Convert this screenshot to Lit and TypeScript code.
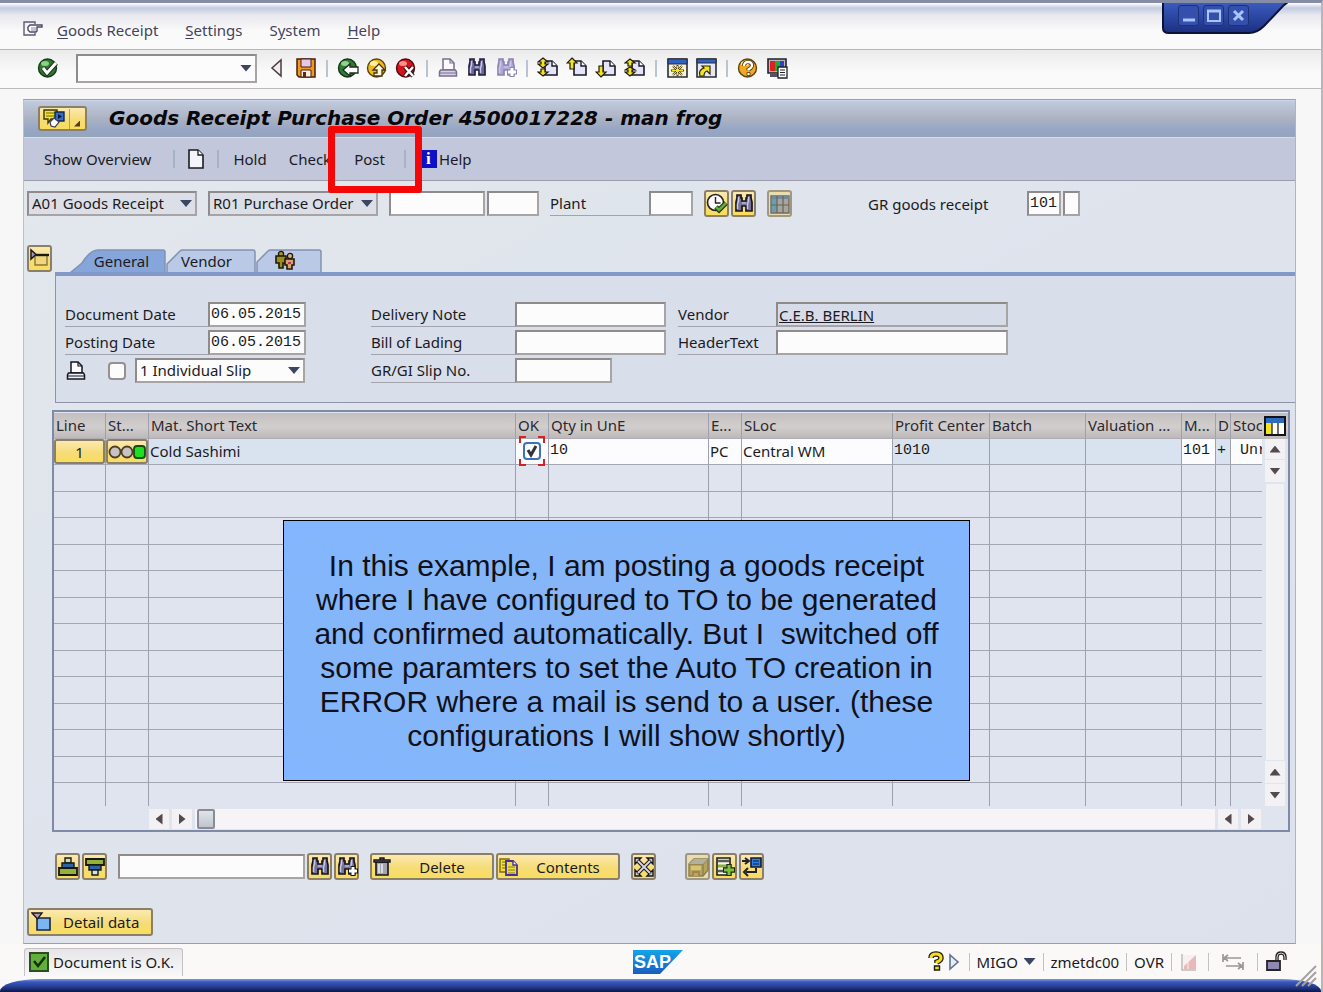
import { LitElement, html, svg, css, nothing } from "lit";
import { customElement } from "lit/decorators.js";
import { classMap } from "lit/directives/class-map.js";

const binoculars = (body: string, edge: string) => svg`
  <path d="M4 2h4v3h1v3h4V5h1V2h4v3l1 4v9h-6v-5H9v5H3V9l1-4z" fill=${body} stroke=${edge} stroke-width="1.7"/>
  <path d="M5.500 4v4l-1 3v5M15.500 4v4l-1 3v5" fill="none" stroke="#c9c7ea" stroke-width="1.5"/>
  <path d="M9 10h4" stroke="#c9c7ea" stroke-width="1.2"/>`;

const sheet = svg`
  <path d="M8 4h7l5 5v9H8z" fill="#e4e4fa" stroke="#1c1a24" stroke-width="1.6"/>
  <path d="M15 4v5h5" fill="#fff" stroke="#1c1a24" stroke-width="1.4"/>`;

const printer = (fill: string, edge: string) => svg`
  <path d="M6 2h7l4 4v7H6z" fill="#fbfbff" stroke=${edge} stroke-width="1.5"/>
  <path d="M13 2v4h4" fill="none" stroke=${edge} stroke-width="1.2"/>
  <path d="M3.500 13h15l1 2v4h-17v-4z" fill=${fill} stroke=${edge} stroke-width="1.5"/>
  <path d="M3 16h16" stroke=${edge} stroke-width="1"/>`;

const ball = (fill: string, light: string, edge: string) => svg`
  <circle cx="10.500" cy="11" r="9" fill=${fill} stroke=${edge} stroke-width="1.4"/>
  <ellipse cx="8" cy="6.500" rx="4" ry="2.500" fill=${light}/>`;

const icons: Record<string, unknown> = {
  menu: svg`<path d="M13 5V3H2v13h11v-2" fill="none" stroke="#5d5b78" stroke-width="1.4"/>
    <path d="M6 8l2-2h12v2h-5v4l-1 1H8l-2-2z" fill="#fff" stroke="#4c4a66" stroke-width="1.4"/><path d="M9 9h6M9 11h6" stroke="#8886a0"/>`,
  enter: svg`${ball("#2d7a2c", "#8fd08a", "#163a18")}<path d="M6 11l4 5 9-10" fill="none" stroke="#20301f" stroke-width="5"/><path d="M6 11l4 5 9-10" fill="none" stroke="#fff" stroke-width="3"/>`,
  prev: svg`<path d="M15 3v16L6 11z" fill="#efedf0" stroke="#4b3b3b" stroke-width="1.5"/>`,
  save: svg`<path d="M2 2h18v18H4l-2-2z" fill="#f09a1c" stroke="#4a1d10" stroke-width="1.5"/><path d="M6 2h10v8H6z" fill="#e3c8ea" stroke="#4a1d10"/><path d="M6 13h10v7H6z" fill="#f7efe6" stroke="#4a1d10"/><path d="M8 15h3v5H8z" fill="#5b2a18"/>`,
  back: svg`${ball("#2f7d32", "#94d190", "#16311a")}<path d="M6 13l7-6v3h8v6h-8v3z" fill="#fff" stroke="#1d2c1d" stroke-width="1.300"/>`,
  exit: svg`${ball("#f2b91c", "#fff3a0", "#5a4310")}<path d="M13 7l6 6h-3v6H8v-3h3v-3H7z" fill="#fffbe0" stroke="#443510" stroke-width="1.300"/>`,
  cancel: svg`${ball("#d2141c", "#f59090", "#4c0c0e")}<path d="M10 10l8 9M18 10l-8 9" stroke="#33100f" stroke-width="4.500"/><path d="M10 10l8 9M18 10l-8 9" stroke="#fff" stroke-width="2.500"/>`,
  print: printer("#d9d0e8", "#776f8c"),
  printDark: printer("#eef0fa", "#15151c"),
  find: binoculars("#6a679c", "#23213c"),
  findDark: binoculars("#77749c", "#17151c"),
  findNext: svg`${binoculars("#b0a8d4", "#8d84b0")}<path d="M17 10v10M12 15h10" stroke="#8a84b0" stroke-width="5"/><path d="M17 11v8M13 15h8" stroke="#fff" stroke-width="3"/>`,
  findNextDark: svg`${binoculars("#77749c", "#17151c")}<path d="M17 10v10M12 15h10" stroke="#17151c" stroke-width="5"/><path d="M17 11v8M13 15h8" stroke="#fff" stroke-width="3"/>`,
  first: svg`${sheet}<path d="M6 1l5 4H8v2h3l-5 4-5-4h3V5H1z" fill="#f4e223" stroke="#1c1a0c" stroke-width="1.200"/><path d="M4 12h4v3h3l-5 4-5-4h3z" fill="#f4e223" stroke="#1c1a0c" stroke-width="1.200"/>`,
  pageUp: svg`${sheet}<path d="M6 1l5 5H8v6H4V6H1z" fill="#f4e223" stroke="#1c1a0c" stroke-width="1.200"/>`,
  pageDown: svg`${sheet}<path d="M6 20l5-5H8V9H4v6H1z" fill="#f4e223" stroke="#1c1a0c" stroke-width="1.200"/>`,
  last: svg`${sheet}<path d="M6 2l5 4H8v3H4V6H1z" fill="#f4e223" stroke="#1c1a0c" stroke-width="1.200"/><path d="M6 10l5 3H8v2h3l-5 4-5-4h3v-2H1z" fill="#f4e223" stroke="#1c1a0c" stroke-width="1.200"/>`,
  session: svg`<path d="M2 2h19v18H2z" fill="#f7f3d8" stroke="#2b2b34" stroke-width="1.6"/><path d="M2 2h19v5H2z" fill="#2e63c4" stroke="#2b2b34"/><path d="M11.500 8v11M5 13.500h13M7 9l9 9M16 9l-9 9" stroke="#4a430f" stroke-width="2"/><path d="M11.500 9v9M6 13.500h11M7 9l9 9M16 9l-9 9" stroke="#f6e51e" stroke-width="1"/>`,
  shortcut: svg`<path d="M2 2h19v18H2z" fill="#e6e7f4" stroke="#2b2b34" stroke-width="1.6"/><path d="M2 2h19v4H2z" fill="#2e63c4" stroke="#2b2b34"/><path d="M5 19q-2-6 4-8L7 9h8v8l-3-3q-3 1-3 5z" fill="#f6e51e" stroke="#29260b" stroke-width="1.200"/>`,
  help: svg`${ball("#f3a820", "#fff2a2", "#5b4210")}<path d="M7 9q0-4 4-4t4 3.500q0 2-3.500 4v1" fill="none" stroke="#4d360e" stroke-width="4"/><path d="M7 9q0-4 4-4t4 3.500q0 2-3.500 4v1" fill="none" stroke="#fff" stroke-width="2.400"/><path d="M10 15.500h3v3h-3z" fill="#fff" stroke="#4d360e" stroke-width=".8"/>`,
  layout: svg`<path d="M2 2h18v14H2z" fill="#b8b8c6" stroke="#22202a" stroke-width="1.600"/><path d="M4 4h5v10H4z" fill="#e02020"/><path d="M9 4h5v10H9z" fill="#1fae2c"/><path d="M14 4h4v10h-4z" fill="#2d3fc8"/><path d="M4 17h8v3H4z" fill="#55535f"/><path d="M12 10h9v11h-9z" fill="#fff" stroke="#22202a" stroke-width="1.300"/><path d="M14 13h5M14 15.500h5M14 18h5" stroke="#22202a"/>`,
  services: svg`<path d="M1 2h13v9H8l-3 4v-4H1z" fill="#f5e52c" stroke="#3c3410" stroke-width="1.400"/><path d="M3 5h9M3 8h9" stroke="#6b6017"/><path d="M12 4h9v9h-9z" fill="#2d6fd0" stroke="#15244a" stroke-width="1.400"/><path d="M15 6l4 2.500-4 2.500z" fill="#0c1530"/><path d="M7 14l4-4 5 4-4 5-4-1z" fill="#fff" stroke="#3e3e54" stroke-width="1.200"/>`,
  create: svg`<path d="M4 2h9l5 5v13H4z" fill="#f4f4fc" stroke="#1b1b22" stroke-width="1.600"/><path d="M13 2v5h5" fill="#fff" stroke="#1b1b22" stroke-width="1.300"/>`,
  execute: svg`<circle cx="9.500" cy="9.500" r="8" fill="#fff" stroke="#23212b" stroke-width="1.600"/><path d="M9.500 4v6h5" fill="none" stroke="#23212b" stroke-width="1.400"/><path d="M10 14l3 3 7-7" fill="none" stroke="#1d3711" stroke-width="5"/><path d="M10 14l3 3 7-7" fill="none" stroke="#63a93b" stroke-width="2.600"/>`,
  grid: svg`<path d="M2 3h18v17H2z" fill="#a9a49c" stroke="#6d6a64" stroke-width="1.400"/><path d="M3 3h17v3H3z" fill="#77879a"/><path d="M3 6h5v13H3z" fill="#6aa0ae"/><path d="M8 3v17M14 3v17M2 12h18" stroke="#66645f" stroke-width="1.200"/>`,
  tree: svg`<path d="M6 7h12v10H6z" fill="#f3d67c" stroke="#8a7638" stroke-width="1.400"/><path d="M2 2v9l5-4.500z" fill="#a497b4" stroke="#1d1a16" stroke-width="1.500"/><path d="M7 7h13" stroke="#1d1a16" stroke-width="2.400"/>`,
  people: svg`<circle cx="7" cy="4" r="2.600" fill="#a8921c" stroke="#1e1a0a" stroke-width="1.300"/><path d="M2 6h10v7H9v5H5v-5H2z" fill="#9c8e1a" stroke="#1e1a0a" stroke-width="1.600"/><circle cx="16" cy="6" r="2.600" fill="#e0b48a" stroke="#1e1a0a" stroke-width="1.300"/><path d="M11 9h9v6h-2v4h-5v-4h-2z" fill="#d9a26a" stroke="#1e1a0a" stroke-width="1.600"/><path d="M14 13h3" stroke="#b53a6a" stroke-width="2"/>`,
  config: svg`<path d="M1 2h20v18H1z" fill="#fdfdf6" stroke="#11121a" stroke-width="2"/><path d="M2 3h18v5H2z" fill="#2c6cc0"/><path d="M2 8h6v11H2z" fill="#f4e41c"/><path d="M8 8v11M14 8v11" stroke="#11121a" stroke-width="1.200"/>`,
  sortUp: svg`<path d="M8 2h6v5H8z" fill="#cfd8c0" stroke="#171a12" stroke-width="1.400"/><path d="M5 7h12v5H5z" fill="#2c64a8" stroke="#171a12" stroke-width="1.400"/><path d="M2 12h18v7H2z" fill="#96b13a" stroke="#171a12" stroke-width="1.800"/>`,
  sortDown: svg`<path d="M2 3h18v6H2z" fill="#96b13a" stroke="#171a12" stroke-width="1.800"/><path d="M5 9h12v5H5z" fill="#2c64a8" stroke="#171a12" stroke-width="1.400"/><path d="M8 14h6v5H8z" fill="#cfe0f5" stroke="#171a12" stroke-width="1.400"/>`,
  trash: svg`<path d="M4 6h12v13H4z" fill="#a7a3ad" stroke="#17151c" stroke-width="1.600"/><path d="M7 8v9M10 8v9" stroke="#e9e7ee" stroke-width="1.600"/><path d="M2 4h16v2H2zM8 2h4v2H8z" fill="#8d8994" stroke="#17151c" stroke-width="1.400"/>`,
  copy: svg`<path d="M2 3h9v13H2z" fill="#f4e12c" stroke="#7c6b16" stroke-width="1.400"/><path d="M4 6h5M4 9h5M4 12h5" stroke="#7c6b16"/><path d="M8 5h7l4 4v10H8z" fill="#e9df3c" stroke="#4b2f9a" stroke-width="1.800"/><path d="M15 5v4h4" fill="#fff" stroke="#4b2f9a" stroke-width="1.400"/><path d="M10 11h7M10 14h7M10 17h7" stroke="#8b7d1a"/>`,
  expand: svg`<path d="M4 4l14 14M18 4L4 18" stroke="#17151c" stroke-width="4"/><path d="M2 8V2h6zM14 2h6v6zM2 14v6h6zM20 14v6h-6z" fill="#c9c5d2" stroke="#17151c" stroke-width="1.400"/><path d="M5 5l12 12M17 5L5 17" stroke="#d6d2de" stroke-width="2"/>`,
  store: svg`<path d="M2 8l5-5h14v11l-5 6H2z" fill="#b7a45c" stroke="#8a7f50" stroke-width="1.400"/><path d="M2 8h14v12M16 8l5-5" fill="none" stroke="#8a7f50" stroke-width="1.300"/><path d="M7 3h14l-5 5H2z" fill="#b4b09e"/><path d="M4 10h10v4H4z" fill="#d8c470"/><path d="M6 20v-4h6v4" fill="#d99a50" stroke="#8a7f50" stroke-width="1.300"/>`,
  insert: svg`<path d="M3 2h13v17H3z" fill="#f4f4ea" stroke="#1b1d16" stroke-width="1.600"/><path d="M4 5h11M4 15h9" stroke="#5b5d58" stroke-width="2.400"/><path d="M4 10h8" stroke="#8cae3c" stroke-width="3"/><path d="M15 8v12M9 14h12" stroke="#1b2a10" stroke-width="5.500"/><path d="M15 9v10M10 14h10" stroke="#7fc03c" stroke-width="3"/>`,
  transfer: svg`<path d="M10 2h10v9H10z" fill="#2f7ee0" stroke="#0f1a34" stroke-width="1.600"/><path d="M12 5h6M12 8h6" stroke="#0f1a34" stroke-width="1.200"/><path d="M1 5h6M4 2l4 3-4 3M15 12v4H5M7 12l-4 4 4 4" fill="none" stroke="#23212b" stroke-width="2"/>`,
  detail: svg`<path d="M6 7h13v12H6z" fill="#7ab7f2" stroke="#1b2440" stroke-width="1.600"/><path d="M1 2h10L6.500 8z" fill="#b79cac" stroke="#1b1a20" stroke-width="1.400"/>`,
  ok: svg`<path d="M2 2h18v18H2z" fill="#62b03a" stroke="#2c4d20" stroke-width="2"/><path d="M6 10l4 5 7-9" fill="none" stroke="#16300e" stroke-width="2.600"/>`,
  question: svg`<path d="M4 7q0-4 5-4t5 4q0 2.500-4 4v1" fill="none" stroke="#1f1b0a" stroke-width="5.500"/><path d="M4 7q0-4 5-4t5 4q0 2.500-4 4v1" fill="none" stroke="#f3dd1e" stroke-width="3"/><path d="M7.500 15h5v4h-5z" fill="#f3dd1e" stroke="#1f1b0a" stroke-width="1.400"/>`,
  next: svg`<path d="M4 4v14l8-7z" fill="#e6edf6" stroke="#5f7590" stroke-width="1.600"/>`,
  signal: svg`<path d="M2 4v15h15V4z" fill="#f6f0f0"/><path d="M3 3v16h14" fill="none" stroke="#c2bcbc" stroke-width="1.500"/><path d="M5 18v-3L17 4v14z" fill="#e9b9b9"/><path d="M9 10v8" stroke="#f6f0f0"/>`,
  swap: svg`<path d="M1 3v8M2 7h17M2 7l4-3M2 7l4 3M21 11v8M20 15H4M20 15l-4-3M20 15l-4 3" fill="none" stroke="#9d9795" stroke-width="1.700"/>`,
  lock: svg`<path d="M12 10V6q0-4 4-4t4 4v3" fill="none" stroke="#2a2326" stroke-width="3.400"/><path d="M12 10V6q0-4 4-4t4 4v3" fill="none" stroke="#d2cedb" stroke-width="1"/><path d="M2 10h13v9H2z" fill="#8d8ab4" stroke="#2a2326" stroke-width="1.800"/>`,
  lights: svg`<circle cx="7" cy="9" r="5.500" fill="#c8c2c4" stroke="#4a3f22" stroke-width="1.800"/><circle cx="19" cy="9" r="5.500" fill="#c8c2c4" stroke="#4a3f22" stroke-width="1.800"/><rect x="26" y="3" width="11" height="12" rx="3" fill="#1ae01f" stroke="#114d12" stroke-width="1.800"/>`,
};

const icon = (name: string, w = 22, h = 22) =>
  html`<svg class="icon" width=${w} height=${h} viewBox="0 0 ${w} ${h}" aria-hidden="true">${icons[name]}</svg>`;

const toolGroups: [string, string][][] = [
  [["prev", "Previous"], ["save", "Save"]],
  [["back", "Back"], ["exit", "Exit"], ["cancel", "Cancel"]],
  [["print", "Print"], ["find", "Find"], ["findNext", "Find next"]],
  [["first", "First page"], ["pageUp", "Page up"], ["pageDown", "Page down"], ["last", "Last page"]],
  [["session", "New session"], ["shortcut", "Create shortcut"]],
  [["help", "Help"], ["layout", "Local layout"]],
];

const columns: [string, string][] = [
  ["Line", "w-line"], ["St...", "w-st"], ["Mat. Short Text", "w-mat"], ["OK", "w-ok"],
  ["Qty in UnE", "w-qty"], ["E...", "w-e"], ["SLoc", "w-sloc"], ["Profit Center", "w-profit"],
  ["Batch", "w-batch"], ["Valuation ...", "w-val"], ["M...", "w-m"], ["D", "w-d"], ["Stoc", "w-stock"],
];

@customElement("app-root")
export class AppRoot extends LitElement {
  static styles = css`
    :host { display: block; font: 15px/20px "Noto Sans", sans-serif; color: #1b1a22; --edge: #8f8b8d; }
    * { box-sizing: border-box; }
    button, input, select { font: inherit; color: inherit; margin: 0; padding: 0; border: 0; background: none; border-radius: 0; }
    .icon { display: block; flex: none; }
    .window { position: relative; min-height: 100vh; display: flex; flex-direction: column; background: #f8f7f8; border-top: 3px solid #858ca5; border-right: 2px solid #b9b5ba; overflow: hidden; }
    .menubar { display: flex; align-items: center; gap: 27px; height: 47px; padding: 8px 22px 0; border-bottom: 1px solid #bab6b6; background: linear-gradient(#fff 0, #c3cbe0 5px, #e8e8ee 12px, #fafafa 28px); color: #44435f; }
    .menubar a { color: inherit; text-decoration: none; }
    .menubar .icon { margin-right: -14px; }
    u { text-underline-offset: 2px; }
    .toolbar { display: flex; align-items: center; height: 39px; padding: 0 37px 2px; border-bottom: 1px solid #bdb8ba; background: linear-gradient(#ebebec, #fbfafa 60%); }
    .tools { display: flex; gap: 7px; }
    .sep { width: 2px; height: 17px; margin: 0 9px; background: #b8c4d4; }
    .pick { display: grid; align-items: center; }
    .pick > *, .pick::after { grid-area: 1 / 1; }
    .pick::after { content: ""; width: 12px; height: 7px; margin-right: 5px; justify-self: end; background: #3b4662; clip-path: polygon(0 0, 100% 0, 50% 100%); pointer-events: none; }
    .pick select, .field { height: 25px; width: 100%; border: 2px solid var(--edge); border-right-color: #a8a4a6; border-bottom-color: #a8a4a6; background: #fdfcfc; appearance: none; }
    .pick select { padding: 0 3px 2px; }
    .field { padding: 0 1px; }
    .pick.gray select { background: #dcdfe7; }
    .command { width: 181px; margin: 0 9px 0 17px; }
    .command select { height: 29px; }
    .main { display: flex; flex-direction: column; flex: 1; margin: 10px 25px 0 23px; border: 1px solid #9c9cab; border-left-color: #c0bfc6; border-right-color: #b3b2c0; background: linear-gradient(150deg, #e2e8ec, #dfe4ed 40%, #dde1ec); }
    .title { display: flex; align-items: center; gap: 22px; height: 38px; padding: 0 14px; border-top: 1px solid #cfd6ea; border-bottom: 1px solid #d7dce8; background: linear-gradient(#c2cadf, #aab2c2 50%, #97a6c6 80%, #93a5b9); }
    h1 { margin: 0 0 3px; font: italic bold 20px/24px "DejaVu Sans", sans-serif; color: #08080c; }
    .gold { display: inline-flex; align-items: center; justify-content: center; height: 27px; width: 25px; border: 2px solid #8b8067; border-radius: 3px; background: linear-gradient(#fbe9b0, #f6dc78 55%, #f8dd5e); }
    .gold.wide { width: 124px; justify-content: flex-start; }
    .gold.wide span { flex: 1; text-align: center; padding-right: 2px; }
    .gold.dim { background: #e9dcae; border-color: #a09880; }
    .gold.service { width: 49px; height: 25px; margin-bottom: 1px; justify-content: flex-start; padding-left: 3px; }
    .service i { height: 20px; width: 15px; margin-left: 4px; border-left: 1px solid #b99f51; display: flex; align-items: flex-end; justify-content: center; }
    .service i::after { content: ""; width: 6px; height: 6px; margin-bottom: 2px; background: #5a3c12; clip-path: polygon(100% 0, 100% 100%, 0 100%); }
    .actions { display: flex; align-items: center; height: 43px; padding: 0 20px; border-bottom: 1px solid #9c9cab; background: #c2c7db; }
    .actions .sep { height: 18px; margin: 0 10px; background: #a5b3c8; }
    .actions .overview { margin-right: 12px; }
    .actions .hold { margin: 0 22px 0 4px; }
    .actions .post { margin: 0 9px 0 23px; }
    .info { display: inline-flex; align-items: center; gap: 2px; margin-left: 4px; }
    .info b { width: 17px; height: 18px; font: bold 17px/17px "Liberation Serif", serif; background: #0d10c4; color: #fff; }
    .select-row { display: flex; align-items: center; margin: 9px 3px 0; }
    .w170 { width: 170px; } .gap { margin-left: 11px; } .gap-s { margin-left: 2px; }
    .lab { display: flex; align-items: flex-end; height: 25px; padding-bottom: 2px; border-bottom: 1px solid #a3a3b0; white-space: nowrap; }
    .mono, .field { font-family: "Liberation Mono", monospace; }
    .sheet-area { display: grid; grid-template-columns: 31px 1fr; margin-top: 28px; }
    .sheet-area > .gold { margin-left: 3px; }
    .tabs { display: flex; align-items: flex-end; height: 27px; padding-left: 15px; }
    .tab { display: grid; height: 23px; }
    .tab > * { grid-area: 1 / 1; }
    .tab span { align-self: center; justify-self: center; padding-right: 9px; display: flex; }
    .tab.active span { padding: 0 0 0 7px; }
    .form { display: flex; min-height: 131px; padding: 26px 0 19px 9px; border: 1px solid #8f93a8; border-top: 4px solid #8298c8; border-right: 0; background: #d9deeb; }
    .col { display: flex; flex-direction: column; gap: 3px; }
    .line { display: flex; align-items: center; height: 25px; }
    .col1 { width: 241px; margin-right: 65px; } .col1 .lab { width: 143px; } .col1 .field { width: 98px; }
    .col2 { width: 295px; margin-right: 12px; } .col2 .lab { width: 144px; } .col2 .field { width: 151px; } .col2 .field.short { width: 97px; }
    .col3 { width: 330px; } .col3 .lab { width: 98px; } .col3 .field { width: 232px; }
    .field.link { font-family: inherit; text-decoration: underline; background: #d6dce8; }
    .tick { appearance: none; width: 18px; height: 18px; border: 2px solid #96918f; border-radius: 4px; background: #fcfcfc; }
    .slip-tick { margin-left: 21px; }
    .slip { width: 170px; margin-left: 9px; }
    .box { margin: 7px 5px 0 28px; border: 2px solid #7f8ba6; background: #e0e4ee; padding: 1px 0 0; }
    .cols { display: flex; }
    table { width: 100%; min-width: 0; border-collapse: separate; border-spacing: 0; table-layout: fixed; }
    th, td { padding: 0 2px; border-left: 1px solid #9da1ae; text-align: left; font-weight: normal; white-space: nowrap; overflow: hidden; }
    th:first-child, td:first-child { border-left: 0; }
    th { height: 26px; padding-bottom: 1px; background: linear-gradient(#c3bfc0, #d2cecd 55%, #bdb9ba); color: #2b2930; border-bottom: 1px solid #b0adb2; }
    td { height: 27px; padding: 0 1px 2px; border-bottom: 1px solid #a4a7b3; }
    tr:nth-child(odd) td { height: 26px; }
    tr.first td { background: #d9e3f0; }
    tr.first td.edit { background: #fcfbfd; }
    tr.last td { height: 23px; border-bottom: 0; }
    td input.cell { display: block; width: 100%; height: 22px; }
    tr td.btn { padding: 0; }
    td .gold { display: flex; width: 100%; height: 25px; }
    td.focus { overflow: visible; }
    .focusbox { position: relative; display: grid; width: 18px; margin: auto; }
    .focusbox .tick { border-color: #3d72b8; }
    .focusbox svg { position: absolute; left: -4px; top: -6px; pointer-events: none; }
    .w-line { width: 51px; } .w-st { width: 43px; } .w-ok { width: 33px; } .w-qty { width: 160px; } .w-e { width: 33px; }
    .w-sloc { width: 151px; } .w-profit { width: 97px; } .w-batch { width: 96px; } .w-val { width: 96px; }
    .w-m { width: 34px; } .w-d { width: 15px; } .w-stock { width: 32px; }
    td.stock { padding-left: 9px; text-overflow: clip; }
    .vbar { flex: none; width: 26px; display: flex; flex-direction: column; align-items: center; }
    .vbar .corner { width: 100%; height: 26px; padding: 1px 2px; background: linear-gradient(#c3bfc0, #d2cecd 55%, #bdb9ba); }
    .arrow { width: 20px; height: 20px; display: grid; place-items: center; background: #f3f1f3; }
    .arrow::after { content: ""; width: 11px; height: 7px; background: #54494c; clip-path: polygon(50% 0, 100% 100%, 0 100%); }
    .arrow.down::after { clip-path: polygon(0 0, 100% 0, 50% 100%); }
    .arrow.left::after { width: 7px; height: 11px; clip-path: polygon(0 50%, 100% 0, 100% 100%); }
    .arrow.right::after { width: 7px; height: 11px; clip-path: polygon(100% 50%, 0 0, 0 100%); }
    .vbar .arrow { height: 22px; margin-top: 1px; }
    .vbar .corner + .arrow { margin-top: 0; height: 20px; }
    .rail { flex: 1; width: 18px; background: #f2f1f4; margin-top: 2px; }
    .hbar { display: flex; gap: 3px; height: 20px; margin: 3px 27px 1px 95px; }
    .hbar .track { flex: 1; background: #f6f4f6; padding-left: 2px; }
    .thumb { width: 18px; height: 20px; border: 2px solid #8b8b95; border-radius: 2px; background: linear-gradient(#dfe4ec, #bfc4d0); }
    .bottom { display: flex; align-items: center; gap: 2px; margin: 21px 31px 0; }
    .bottom .field { width: 187px; margin: 0 0 0 9px; }
    .bottom .skip { margin-left: 9px; } .bottom .skip-l { margin-left: 27px; }
    .gold.detail { width: 126px; height: 28px; margin: 28px 3px 6px; gap: 10px; justify-content: flex-start; padding-left: 2px; }
    .status { display: grid; grid-template-columns: 1fr auto 1fr; align-items: center; height: 35px; padding: 0 34px 0 28px; background: #faf9f8; }
    .message { justify-self: start; display: flex; align-items: center; gap: 3px; height: 28px; margin-left: -4px; padding: 0 8px 0 3px; border: 1px solid #c5c2c6; border-bottom: 0; border-radius: 3px 3px 0 0; background: linear-gradient(#e6e6ea, #f9f8f8); }
    .facts { justify-self: end; display: flex; align-items: center; }
    .facts .sep { height: 18px; width: 1px; margin: 0 7px; background: #c5c0c2; }
    .facts .swap { margin: 0 6px; }
    .migo { width: 59px; } .migo::after { margin: 0; }
    .pick.migo select { border: 0; padding: 0; background: none; height: 20px; }
    .base { height: 13px; background: linear-gradient(#7f97dd, #3a58bb 3px, #28429c 7px, #0c1746); border-radius: 40px 40px 0 0 / 12px 12px 0 0; }
    .grip { position: absolute; right: 3px; bottom: 4px; }
    .controls { position: absolute; top: -3px; right: 31px; width: 128px; height: 38px; }
    .controls .plate { position: absolute; inset: 0; }
    .controls div { position: relative; display: flex; gap: 4px; padding: 5px 0 0 16px; }
    .controls button { width: 21px; height: 21px; border: 1px solid #1d3178; border-radius: 3px; background: #3450ac; }
    .controls button svg { display: block; }
    .highlight { position: absolute; left: 328px; top: 123px; width: 94px; height: 67px; border: 7px solid #f30707; border-radius: 3px; pointer-events: none; }
    .note { position: absolute; left: 283px; top: 517px; width: 687px; padding: 28px 16px 27px; border: 1px solid #000; background: radial-gradient(#86b6f8 40%, #83b6ff); font: 30px/34px "Liberation Sans", Arial, sans-serif; text-align: center; color: #101018; }
    .note p { margin: 0; white-space: pre-wrap; }
  `;

  private tab(label: unknown, w: number, path: string, active = false) {
    return html`<button class=${classMap({ tab: true, active })} role="tab" aria-selected=${active}>
      <svg width=${w} height="23" viewBox="0 0 ${w} 23" aria-hidden="true"><path d=${path} fill=${active ? "#86a5da" : "#b9c9e6"} stroke="#8291b4" stroke-width="1.5"/></svg>
      <span>${label}</span></button>`;
  }

  private gold(name: string, label: string, extra = "") {
    return html`<button class="gold ${extra}" aria-label=${label}>${icon(name)}</button>`;
  }

  private firstRow() {
    return html`<tr class="first">
      <td class="btn"><button class="gold">1</button></td>
      <td class="btn"><button class="gold" aria-label="Status green">${icon("lights", 38, 18)}</button></td>
      <td>Cold Sashimi</td>
      <td class="edit focus"><span class="focusbox"><input class="tick" type="checkbox" checked aria-label="Item OK">
        <svg width="26" height="30" viewBox="0 0 26 30"><path d="M1 7V1h6M19 1h6v6M25 23v6h-6M7 29H1v-6" fill="none" stroke="#d81f26" stroke-width="2"/><path d="M9 14l3 5 5-9" fill="none" stroke="#33333d" stroke-width="3"/></svg></span></td>
      <td class="edit"><input class="cell mono" value="10" aria-label="Qty in UnE"></td>
      <td class="edit"><input class="cell" value="PC" aria-label="Unit"></td>
      <td class="edit"><input class="cell" value="Central WM" aria-label="Storage location"></td>
      <td class="mono">1010</td><td></td><td></td>
      <td class="edit"><input class="cell mono" value="101" aria-label="Movement type"></td>
      <td class="mono">+</td><td class="edit mono stock">Unr</td>
    </tr>`;
  }

  render() {
    return html`<div class="window">
      <nav class="menubar">${icon("menu")}
        <a href="#"><u>G</u>oods Receipt</a><a href="#"><u>S</u>ettings</a><a href="#">S<u>y</u>stem</a><a href="#"><u>H</u>elp</a>
      </nav>
      <div class="toolbar">
        <button aria-label="Enter">${icon("enter")}</button>
        <div class="pick command"><select aria-label="Command"><option></option></select></div>
        ${toolGroups.map((g, i) => html`${i ? html`<span class="sep"></span>` : nothing}
          <div class="tools">${g.map(([n, l]) => html`<button aria-label=${l}>${icon(n)}</button>`)}</div>`)}
      </div>
      <main class="main">
        <header class="title"><button class="gold service" aria-label="Services for object">${icon("services")}<i></i></button>
          <h1>Goods Receipt Purchase Order 4500017228 - man frog</h1></header>
        <div class="actions">
          <button class="overview">Show Overview</button><span class="sep"></span><button aria-label="Create">${icon("create")}</button>
          <span class="sep"></span><button class="hold">Hold</button><button>Check</button><button class="post">Post</button>
          <span class="sep"></span><button class="info"><b>i</b>Help</button>
        </div>
        <div class="select-row">
          <div class="pick gray w170"><select aria-label="Action"><option>A01 Goods Receipt</option></select></div>
          <div class="pick gray w170 gap"><select aria-label="Reference"><option>R01 Purchase Order</option></select></div>
          <input class="field gap" style="width:96px" aria-label="Purchase order">
          <input class="field gap-s" style="width:52px" aria-label="Item">
          <label class="lab gap" style="width:99px" for="plant">Plant</label><input class="field" id="plant" style="width:44px">
          <span class="gap"></span>${this.gold("execute", "Execute")}<span class="gap-s"></span>${this.gold("findDark", "Find")}
          <span class="gap"></span>${this.gold("grid", "Settings", "dim")}
          <label for="mvt" style="width:159px;margin-left:76px">GR goods receipt</label>
          <input class="field" id="mvt" style="width:34px" value="101"><input class="field gap-s" style="width:17px" aria-label="Special stock">
        </div>
        <section class="sheet-area">
          ${this.gold("tree", "Close header data")}
          <div>
            <div class="tabs" role="tablist">
              ${this.tab("General", 96, "M0 24L12 14Q20 1 28 1H93Q95 1 95 3V24", true)}
              ${this.tab("Vendor", 90, "M1 24V15L14 2Q15 1 17 1H87Q89 1 89 3V24")}
              ${this.tab(icon("people"), 66, "M1 24V13L12 2Q13 1 15 1H63Q65 1 65 3V24")}
            </div>
            <div class="form">
              <div class="col col1">
                <div class="line"><label class="lab" for="dd">Document Date</label><input class="field" id="dd" value="06.05.2015"></div>
                <div class="line"><label class="lab" for="pd">Posting Date</label><input class="field" id="pd" value="06.05.2015"></div>
                <div class="line">${icon("printDark")}<input class="tick slip-tick" type="checkbox" aria-label="Print slip">
                  <div class="pick slip"><select aria-label="Slip type"><option>1 Individual Slip</option></select></div></div>
              </div>
              <div class="col col2">
                <div class="line"><label class="lab" for="dn">Delivery Note</label><input class="field" id="dn"></div>
                <div class="line"><label class="lab" for="bl">Bill of Lading</label><input class="field" id="bl"></div>
                <div class="line"><label class="lab" for="gs">GR/GI Slip No.</label><input class="field short" id="gs"></div>
              </div>
              <div class="col col3">
                <div class="line"><label class="lab" for="vn">Vendor</label><input class="field link" id="vn" readonly value="C.E.B. BERLIN"></div>
                <div class="line"><label class="lab" for="ht">HeaderText</label><input class="field" id="ht"></div>
              </div>
            </div>
          </div>
        </section>
        <section class="box">
          <div class="cols">
            <table>
              <colgroup>${columns.map(([, c]) => html`<col class=${c}>`)}</colgroup>
              <thead><tr>${columns.map(([n]) => html`<th>${n}</th>`)}</tr></thead>
              <tbody>${this.firstRow()}
                ${Array.from({ length: 13 }, (_, i) => html`<tr class=${classMap({ last: i === 12 })}>${columns.map(() => html`<td></td>`)}</tr>`)}
              </tbody>
            </table>
            <div class="vbar">
              <button class="corner" aria-label="Configuration">${icon("config")}</button>
              <button class="arrow" aria-label="First row"></button><button class="arrow down" aria-label="Row down"></button>
              <span class="rail"></span>
              <button class="arrow" aria-label="Row up"></button><button class="arrow down" aria-label="Last row"></button>
            </div>
          </div>
          <div class="hbar">
            <button class="arrow left" aria-label="Scroll left"></button><button class="arrow right" aria-label="Scroll right"></button>
            <div class="track"><div class="thumb"></div></div>
            <button class="arrow left" aria-label="Column left"></button><button class="arrow right" aria-label="Column right"></button>
          </div>
        </section>
        <div class="bottom">
          ${this.gold("sortUp", "Sort ascending")}${this.gold("sortDown", "Sort descending")}
          <input class="field" aria-label="Search">${this.gold("findDark", "Find item")}${this.gold("findNextDark", "Find next item")}
          <button class="gold wide skip">${icon("trash")}<span>Delete</span></button>
          <button class="gold wide">${icon("copy")}<span>Contents</span></button>
          ${this.gold("expand", "Expand", "skip")}
          ${this.gold("store", "Stock", "dim skip-l")}${this.gold("insert", "Insert line")}${this.gold("transfer", "Transfer")}
        </div>
        <button class="gold detail">${icon("detail")}<span>Detail data</span></button>
      </main>
      <footer class="status">
        <div class="message">${icon("ok")}<span>Document is O.K.</span></div>
        <svg width="50" height="24" viewBox="0 0 50 24" role="img" aria-label="SAP">
          <defs><linearGradient id="g" x2="0" y2="1"><stop stop-color="#12a5ea"/><stop offset="1" stop-color="#1a5cc0"/></linearGradient></defs>
          <path d="M0 0h50L27 24H0z" fill="url(#g)"/>
          <text x="1" y="18" font-family="Liberation Sans" font-weight="bold" font-size="18" fill="#fff">SAP</text></svg>
        <div class="facts">${icon("question", 19, 22)}${icon("next", 16, 22)}<span class="sep"></span>
          <div class="pick migo"><select aria-label="Transaction"><option>MIGO</option></select></div><span class="sep"></span>
          <span>zmetdc00</span><span class="sep"></span><span>OVR</span><span class="sep"></span>${icon("signal")}
          <span class="sep"></span><span class="swap">${icon("swap")}</span><span class="sep"></span>${icon("lock")}</div>
      </footer>
      <div class="base"></div>
      <svg class="grip" width="24" height="24" viewBox="0 0 24 24" aria-hidden="true"><path d="M2 22L22 2M8 22L22 8M14 22l8-8" stroke="#a5a1a4" stroke-width="2"/></svg>
      <div class="controls">
        <svg class="plate" width="128" height="38" viewBox="0 0 128 38" aria-hidden="true">
          <defs><linearGradient id="p" x2="0" y2="1"><stop stop-color="#3d5fc4"/><stop offset="1" stop-color="#1c2f80"/></linearGradient></defs>
          <path d="M1 0V28Q1 33 7 33H87Q95 33 102 26L121 6Q126 2 128 0z" fill="url(#p)" stroke="#0c1436" stroke-width="2"/></svg>
        <div>
          <button aria-label="Minimize"><svg width="19" height="19"><path d="M4 14h12" stroke="#a9c4fb" stroke-width="3"/></svg></button>
          <button aria-label="Maximize"><svg width="19" height="19"><path d="M4 5h12v10H4z" fill="none" stroke="#a9c4fb" stroke-width="2"/><path d="M3 5h14" stroke="#a9c4fb" stroke-width="3"/></svg></button>
          <button aria-label="Close"><svg width="19" height="19"><path d="M5 5l9 9M14 5l-9 9" stroke="#a9c4fb" stroke-width="3"/></svg></button>
        </div>
      </div>
      <div class="highlight"></div>
      <aside class="note"><p>In this example, I am posting a goods receipt
where I have configured to TO to be generated
and confirmed automatically. But I  switched off
some paramters to set the Auto TO creation in
ERROR where a mail is send to a user. (these
configurations I will show shortly)</p></aside>
    </div>`;
  }
}
